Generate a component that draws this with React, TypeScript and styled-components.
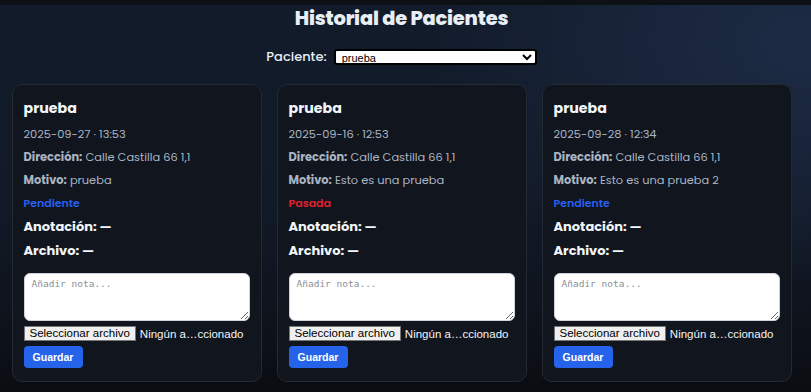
import React from 'react';
import styled, { createGlobalStyle } from 'styled-components';

const GlobalStyle = createGlobalStyle`
  html, body {
    margin: 0;
    padding: 0;
    height: 100%;
  }
  body {
    background: #0b0d12;
    font-family: "Poppins", "Inter", "Noto Sans", sans-serif;
  }
`;

const TopBar = styled.div`
  height: 5px;
  background: #0d1014;
`;

const Page = styled.main`
  min-height: 387px;
  box-sizing: border-box;
  padding: 0 8px 0 0;
  background:
    radial-gradient(ellipse 70% 90% at 100% 10%, rgba(30, 45, 72, 0.9) 0%, rgba(30, 45, 72, 0) 70%),
    linear-gradient(180deg, #111b2a 0%, #121a28 50%, #0d1119 88%, #0a0c10 100%);
  display: flex;
  flex-direction: column;
  align-items: center;
`;

const Title = styled.h1`
  margin: 0;
  color: #e8eef5;
  font-size: 19.4px;
  font-weight: 800;
  line-height: 28px;
  letter-spacing: -0.2px;
`;

const Filter = styled.div`
  display: flex;
  align-items: center;
  gap: 7px;
  margin-top: 15px;
  height: 18px;
`;

const FilterLabel = styled.label`
  color: #e5edf5;
  font-size: 13px;
  font-weight: 500;
  line-height: 18px;
`;

const Select = styled.select`
  width: 203px;
  height: 16px;
  box-sizing: border-box;
  border: 2px solid #000;
  border-radius: 3px;
  background: #fff;
  font-family: "Liberation Sans", Arial, sans-serif;
  font-size: 11px;
  padding: 0 2px;
  color: #000;
`;

const Grid = styled.div`
  display: grid;
  grid-template-columns: repeat(3, 250px);
  gap: 15px;
  margin-top: 18px;
`;

const Card = styled.section`
  box-sizing: border-box;
  background: #11161e;
  border: 1px solid #252a32;
  border-radius: 10px;
  padding: 13px 11px 13px 11px;
  display: flex;
  flex-direction: column;
`;

const Name = styled.h2`
  margin: 0;
  color: #f3f6fa;
  font-size: 14.2px;
  font-weight: 700;
  line-height: 20px;
`;

const Line = styled.p<{ $gap?: number }>`
  margin: ${p => p.$gap ?? 5}px 0 0 0;
  color: #aab5c4;
  font-size: 11.4px;
  line-height: 18px;
`;

const Label = styled.b`
  font-weight: 700;
`;

const Status = styled.p<{ $tone: 'pending' | 'past' }>`
  margin: 5px 0 0 0;
  color: ${p => (p.$tone === 'past' ? '#e0212e' : '#2a5ff0')};
  font-size: 11px;
  font-weight: 600;
  line-height: 18px;
`;

const Strong = styled.p`
  margin: 5px 0 0 0;
  color: #f3f6fa;
  font-size: 13px;
  font-weight: 700;
  line-height: 19px;
`;

const Note = styled.textarea`
  margin-top: 13px;
  width: 100%;
  height: 48px;
  box-sizing: border-box;
  border: 1px solid #d0d4da;
  border-radius: 6px;
  padding: 4px 7px;
  font-family: "DejaVu Sans Mono", monospace;
  font-size: 9.5px;
  background: #fff;
  &::placeholder {
    color: #8a8f96;
  }
`;

const FileRow = styled.div`
  display: flex;
  align-items: center;
  gap: 4px;
  margin-top: 5px;
  font-family: "Liberation Sans", Arial, sans-serif;
  font-size: 11.5px;
  color: #f2f5f9;
  white-space: nowrap;
`;

const FileButton = styled.button`
  height: 15px;
  box-sizing: border-box;
  padding: 0 5px;
  border: 1px solid #767676;
  border-radius: 0;
  background: #efefef;
  color: #000;
  font-family: "Liberation Sans", Arial, sans-serif;
  font-size: 11.5px;
  line-height: 13px;
`;

const SaveButton = styled.button`
  align-self: flex-start;
  margin-top: 5px;
  width: 59px;
  height: 22px;
  border: none;
  border-radius: 4px;
  background: #2563eb;
  color: #fff;
  font-family: "Liberation Sans", Arial, sans-serif;
  font-size: 10.5px;
  font-weight: 700;
`;

type Visit = {
  date: string;
  motivo: string;
  status: 'pending' | 'past';
};

const visits: Visit[] = [
  { date: '2025-09-27 · 13:53', motivo: 'prueba', status: 'pending' },
  { date: '2025-09-16 · 12:53', motivo: 'Esto es una prueba', status: 'past' },
  { date: '2025-09-28 · 12:34', motivo: 'Esto es una prueba 2', status: 'pending' },
];

export default function App() {
  return (
    <>
      <GlobalStyle />
      <TopBar />
      <Page>
        <Title>Historial de Pacientes</Title>
        <Filter>
          <FilterLabel htmlFor="paciente">Paciente:</FilterLabel>
          <Select id="paciente" defaultValue="prueba">
            <option value="prueba">prueba</option>
          </Select>
        </Filter>
        <Grid>
          {visits.map((v, i) => (
            <Card key={i}>
              <Name>prueba</Name>
              <Line $gap={7}>{v.date}</Line>
              <Line>
                <Label>Dirección:</Label> Calle Castilla 66 1,1
              </Line>
              <Line>
                <Label>Motivo:</Label> {v.motivo}
              </Line>
              <Status $tone={v.status}>{v.status === 'past' ? 'Pasada' : 'Pendiente'}</Status>
              <Strong>Anotación: —</Strong>
              <Strong>Archivo: —</Strong>
              <Note placeholder="Añadir nota..." />
              <FileRow>
                <FileButton type="button">Seleccionar archivo</FileButton>
                <span>Ningún a…ccionado</span>
              </FileRow>
              <SaveButton type="button">Guardar</SaveButton>
            </Card>
          ))}
        </Grid>
      </Page>
    </>
  );
}
